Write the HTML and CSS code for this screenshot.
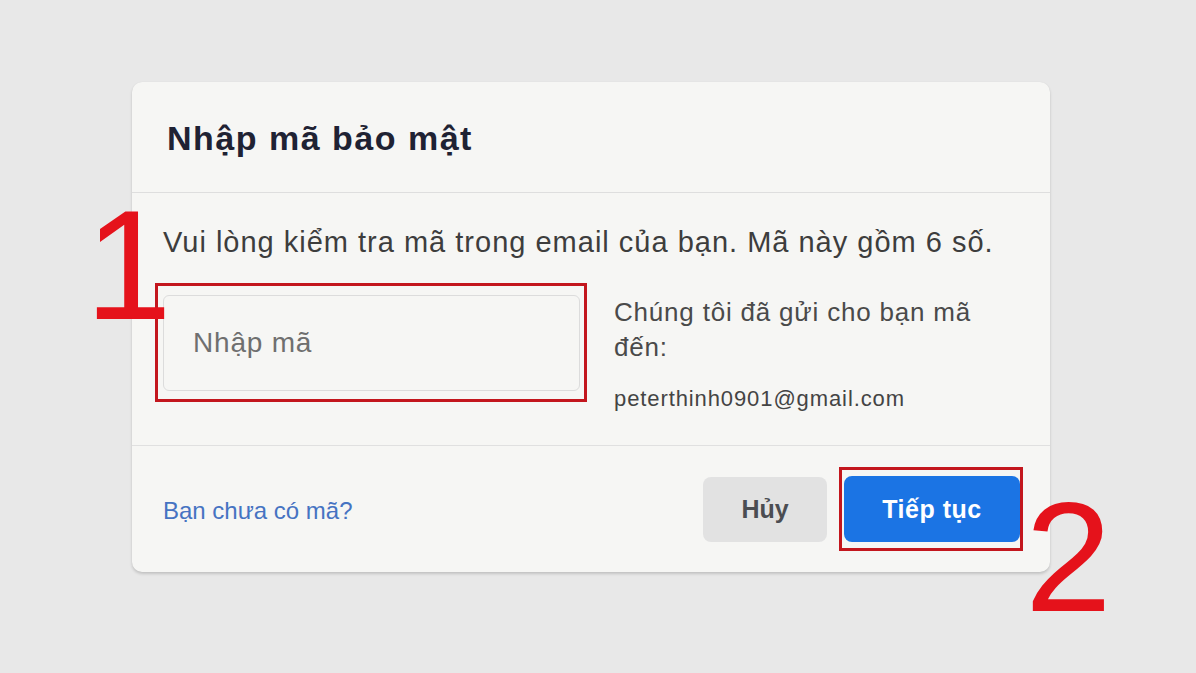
FILE: index.html
```html
<!DOCTYPE html>
<html lang="vi">
<head>
<meta charset="utf-8">
<title>Nhập mã bảo mật</title>
<link rel="stylesheet" href="styles.css">
</head>
<body>
<div class="page">
  <div class="card">
    <div class="card-header">
      <h1 class="title">Nhập mã bảo mật</h1>
    </div>
    <div class="card-body">
      <p class="lead">Vui lòng kiểm tra mã trong email của bạn. Mã này gồm 6 số.</p>
      <div class="code-row">
        <div class="input-wrap">
          <input class="code-input" type="text" placeholder="Nhập mã">
          <span class="mark-box mark-input"></span>
        </div>
        <div class="sent-info">
          <p class="sent-text">Chúng tôi đã gửi cho bạn mã đến:</p>
          <p class="sent-email">peterthinh0901@gmail.com</p>
        </div>
      </div>
    </div>
    <div class="card-footer">
      <a class="no-code" href="#">Bạn chưa có mã?</a>
      <div class="actions">
        <button class="btn btn-cancel" type="button">Hủy</button>
        <div class="btn-wrap">
          <button class="btn btn-primary" type="button">Tiếp tục</button>
          <span class="mark-box mark-btn"></span>
        </div>
      </div>
    </div>
  </div>
  <span class="step step-1">1</span>
  <span class="step step-2">2</span>
</div>
</body>
</html>
```
FILE: styles.css
```css
html, body {
  margin: 0;
  padding: 0;
}
body {
  background: #e8e8e8;
  font-family: "Liberation Sans", Arial, sans-serif;
  width: 1196px;
  height: 673px;
  overflow: hidden;
}
.page {
  position: relative;
  padding: 82px 0 0 132px;
  height: 591px;
}
.card {
  width: 918px;
  height: 490px;
  background: #f6f6f4;
  border-radius: 10px;
  box-shadow: 0 2px 3px rgba(0, 0, 0, 0.16), 0 0 1px rgba(0, 0, 0, 0.08);
  display: flex;
  flex-direction: column;
}
.card-header {
  height: 110px;
  border-bottom: 1px solid #dedede;
  display: flex;
  align-items: center;
  padding-left: 35px;
}
.title {
  margin: 0;
  font-size: 34px;
  font-weight: 700;
  letter-spacing: 1.5px;
  color: #1f2233;
  line-height: 40px;
  padding-top: 2px;
}
.card-body {
  flex: 1;
  padding: 32px 31px 0 31px;
}
.lead {
  margin: 0;
  font-size: 29px;
  line-height: 34px;
  letter-spacing: 1px;
  color: #3d3d3d;
}
.code-row {
  display: flex;
  margin-top: 36px;
  gap: 34px;
}
.input-wrap {
  position: relative;
  width: 417px;
  height: 96px;
}
.code-input {
  box-sizing: border-box;
  width: 417px;
  height: 96px;
  border: 1px solid #dcdcdc;
  border-radius: 6px;
  background: #f6f6f4;
  padding: 0 0 0 29px;
  font-family: "Liberation Sans", Arial, sans-serif;
  font-size: 28px;
  letter-spacing: 0.8px;
  color: #333;
  outline: none;
}
.code-input::placeholder {
  color: #6f6f6f;
}
.mark-box {
  position: absolute;
  box-sizing: border-box;
  border: 3px solid #c3161d;
  pointer-events: none;
}
.mark-input {
  top: -12px;
  left: -8px;
  right: -7px;
  bottom: -11px;
}
.sent-info {
  width: 380px;
}
.sent-text {
  margin: 0;
  font-size: 26px;
  line-height: 35px;
  letter-spacing: 0.8px;
  color: #4a4a4a;
}
.sent-email {
  margin: 21px 0 0 0;
  font-size: 22px;
  line-height: 26px;
  letter-spacing: 0.9px;
  color: #444;
}
.card-footer {
  height: 126px;
  border-top: 1px solid #e0e0e0;
  padding: 0 30px 0 31px;
  display: flex;
  align-items: center;
  justify-content: space-between;
}
.no-code {
  font-size: 24px;
  color: #4673c2;
  text-decoration: none;
  padding-top: 3px;
}
.actions {
  display: flex;
  align-items: center;
  gap: 17px;
}
.btn {
  border: none;
  border-radius: 8px;
  font-family: "Liberation Sans", Arial, sans-serif;
  font-size: 25px;
  font-weight: 700;
  cursor: pointer;
  padding: 0;
}
.btn-cancel {
  width: 124px;
  height: 65px;
  background: #e2e2e2;
  color: #4b4d52;
}
.btn-wrap {
  position: relative;
  display: flex;
}
.btn-primary {
  width: 176px;
  height: 66px;
  background: #1b74e4;
  color: #ffffff;
  letter-spacing: 0.5px;
}
.mark-btn {
  top: -9px;
  left: -5px;
  right: -3px;
  bottom: -9px;
}
.step {
  position: absolute;
  font-family: "Liberation Sans", Arial, sans-serif;
  font-size: 156px;
  line-height: 1;
  color: #e5121b;
}
.step-1 {
  left: 85px;
  top: 187px;
}
.step-2 {
  left: 1025px;
  top: 479px;
}
```
